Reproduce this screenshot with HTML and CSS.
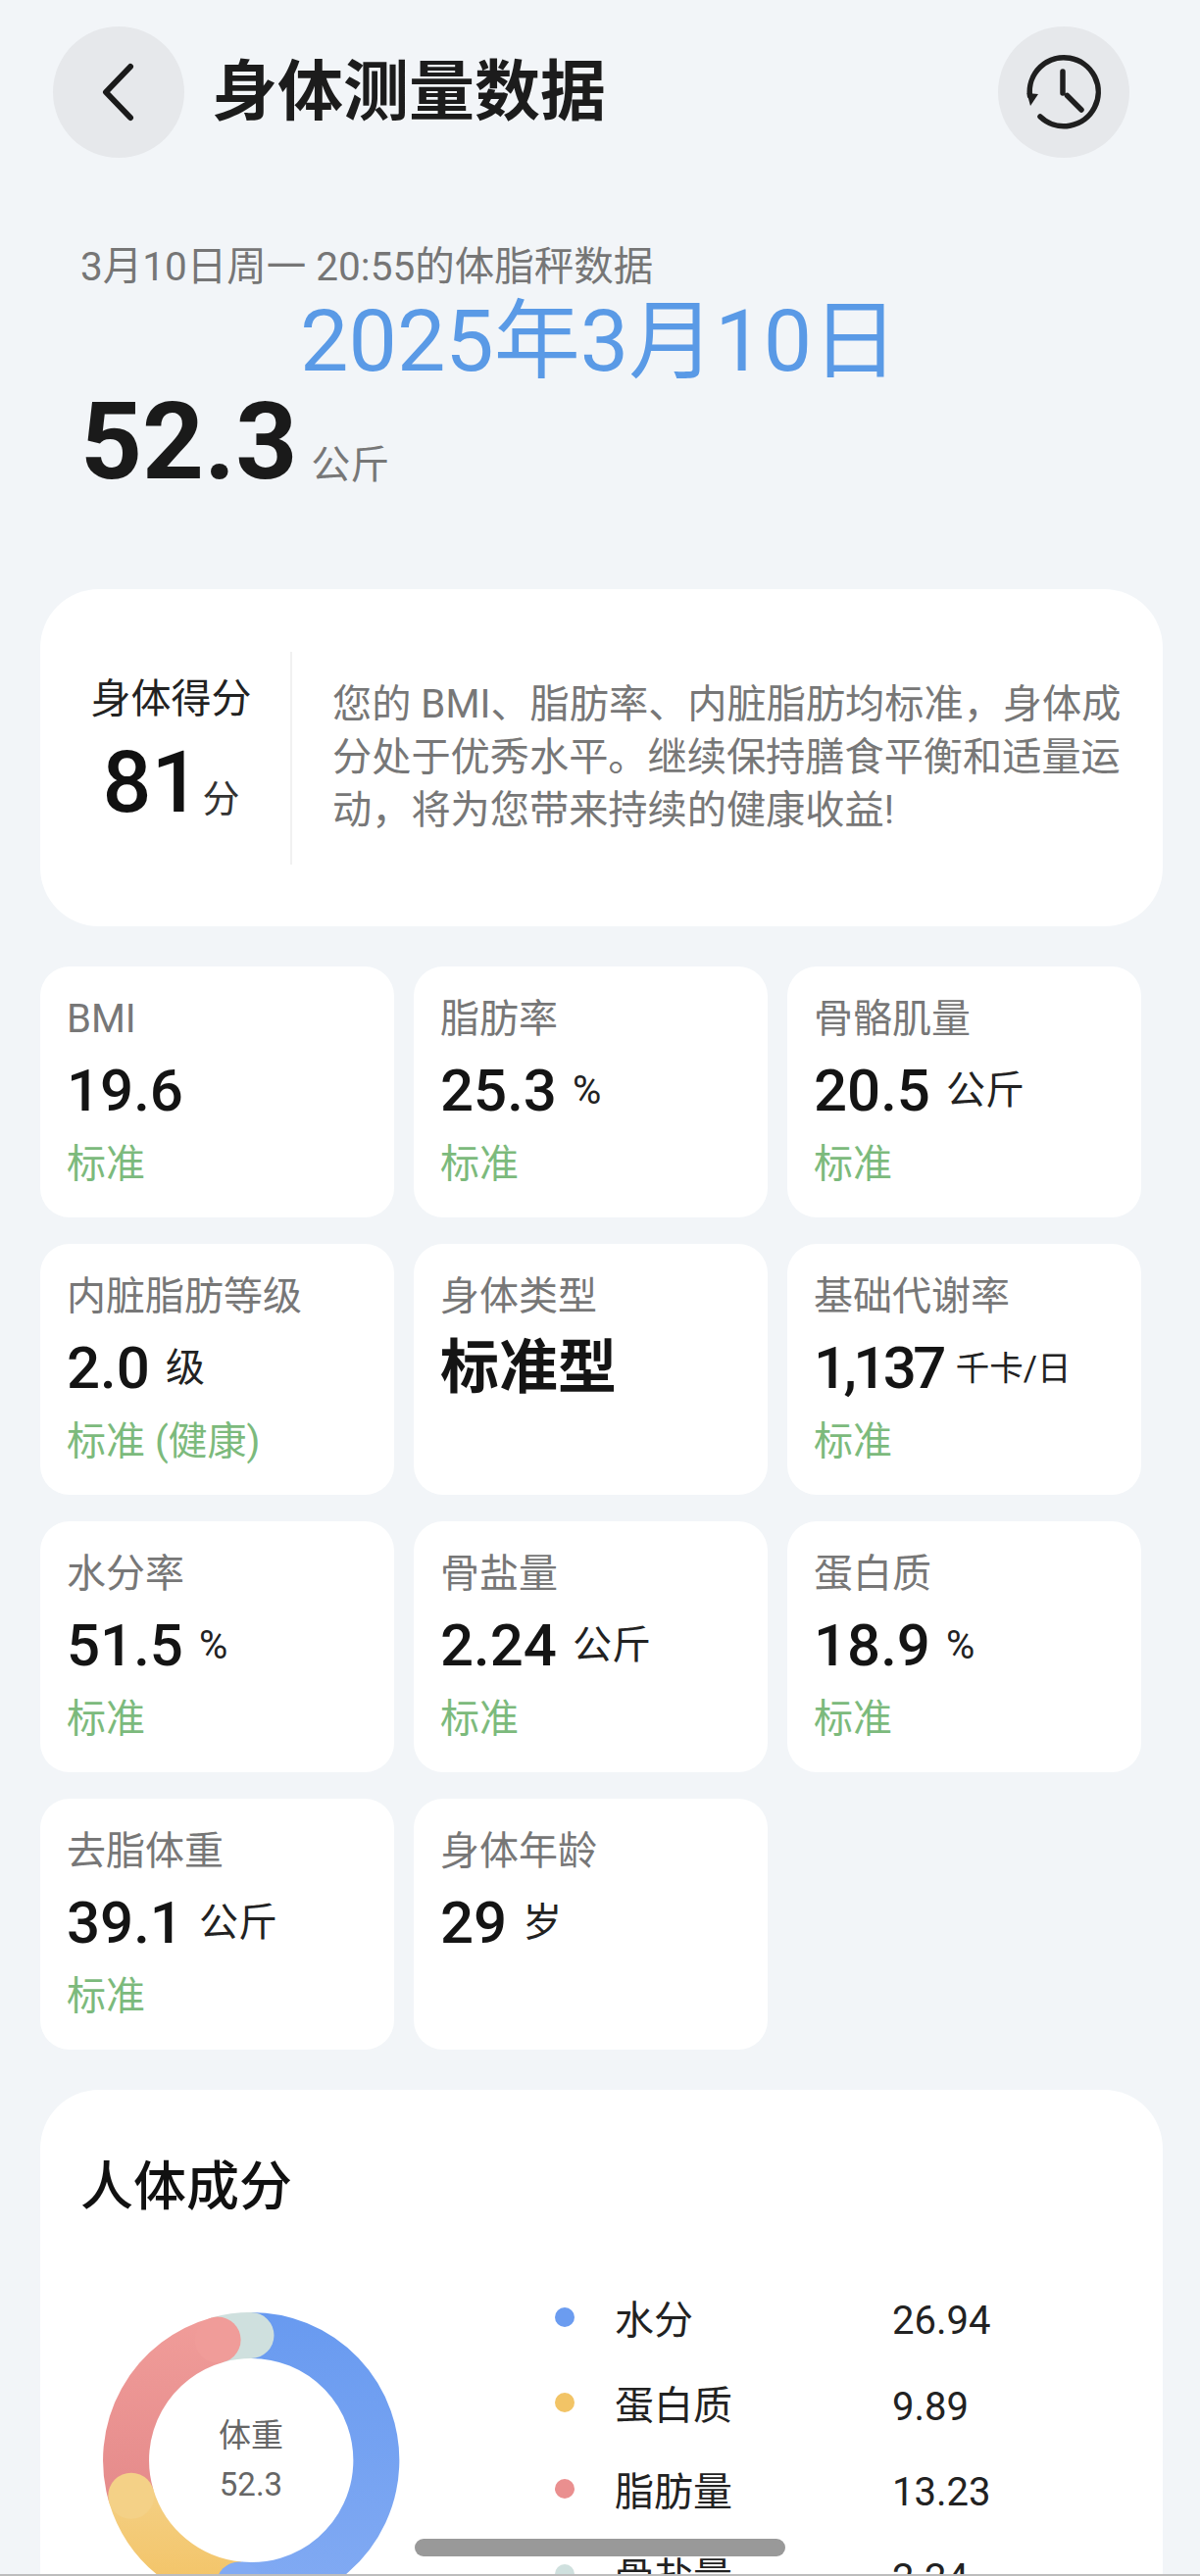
FILE: index.html
```html
<!DOCTYPE html>
<html lang="zh-CN">
<head>
<meta charset="utf-8">
<title>身体测量数据</title>
<link rel="stylesheet" href="styles.css">
</head>
<body>
<div class="page">
  <header class="header">
    <button class="round-btn" aria-label="返回">
      <svg class="back-icon" viewBox="0 0 40 64"><path d="M32 6 L7 32 L32 58"/></svg>
    </button>
    <h1 class="title">身体测量数据</h1>
    <button class="round-btn history-btn" aria-label="历史">
      <svg class="history-icon" viewBox="0 0 80 80">
        <path d="M5.500 44 A35 35 0 1 1 16 65"/>
        <path d="M39 19 V41 M43.500 43.500 L58 58"/>
        <path class="arrow" d="M2.500 41 L14 42 L6 54 Z"/>
      </svg>
    </button>
  </header>

  <section class="summary">
    <div class="date">3月10日周一 20:55的体脂秤数据</div>
    <div class="stamp">2025年3月10日</div>
    <div class="weight"><span class="weight-num">52.3</span><span class="weight-unit">公斤</span></div>
  </section>

  <section class="score-card">
    <div class="score">
      <div class="score-label">身体得分</div>
      <div class="score-value"><span class="score-num">81</span><span class="score-unit">分</span></div>
    </div>
    <p class="score-text">您的 BMI、脂肪率、内脏脂肪均标准&#xFF0C;身体成分处于优秀水平。继续保持膳食平衡和适量运动&#xFF0C;将为您带来持续的健康收益!</p>
  </section>

  <section class="metrics">
    <div class="metric"><div class="m-label">BMI</div><div class="m-value">19.6</div><div class="m-status">标准</div></div>
    <div class="metric"><div class="m-label">脂肪率</div><div class="m-value">25.3<span class="m-unit">%</span></div><div class="m-status">标准</div></div>
    <div class="metric"><div class="m-label">骨骼肌量</div><div class="m-value">20.5<span class="m-unit">公斤</span></div><div class="m-status">标准</div></div>
    <div class="metric"><div class="m-label">内脏脂肪等级</div><div class="m-value">2.0<span class="m-unit">级</span></div><div class="m-status">标准 (健康)</div></div>
    <div class="metric"><div class="m-label">身体类型</div><div class="m-value m-value-text">标准型</div></div>
    <div class="metric"><div class="m-label">基础代谢率</div><div class="m-value"><span class="m-tight">1,137</span><span class="m-unit m-unit-sm">千卡/日</span></div><div class="m-status">标准</div></div>
    <div class="metric"><div class="m-label">水分率</div><div class="m-value">51.5<span class="m-unit">%</span></div><div class="m-status">标准</div></div>
    <div class="metric"><div class="m-label">骨盐量</div><div class="m-value">2.24<span class="m-unit">公斤</span></div><div class="m-status">标准</div></div>
    <div class="metric"><div class="m-label">蛋白质</div><div class="m-value">18.9<span class="m-unit">%</span></div><div class="m-status">标准</div></div>
    <div class="metric"><div class="m-label">去脂体重</div><div class="m-value">39.1<span class="m-unit">公斤</span></div><div class="m-status">标准</div></div>
    <div class="metric"><div class="m-label">身体年龄</div><div class="m-value">29<span class="m-unit">岁</span></div></div>
  </section>

  <section class="composition">
    <h2 class="comp-title">人体成分</h2>
    <div class="comp-body">
      <div class="donut">
        <svg class="donut-svg" viewBox="0 0 304 304">
          <defs>
            <linearGradient id="gb" gradientUnits="userSpaceOnUse" x1="0" y1="0" x2="0" y2="304"><stop offset="0" stop-color="#689af0"/><stop offset="1" stop-color="#83abf3"/></linearGradient>
            <linearGradient id="gy" gradientUnits="userSpaceOnUse" x1="0" y1="170" x2="0" y2="304"><stop offset="0" stop-color="#f4d187"/><stop offset="1" stop-color="#f3c161"/></linearGradient>
            <linearGradient id="gr" gradientUnits="userSpaceOnUse" x1="0" y1="10" x2="0" y2="190"><stop offset="0" stop-color="#f09c99"/><stop offset="1" stop-color="#e58b8b"/></linearGradient>
          </defs>
          <g fill="none" stroke-width="47">
            <path stroke="url(#gb)" d="M152 24.500 A127.500 127.500 0 1 1 140 278.900"/>
            <path stroke="url(#gy)" d="M140 278.900 A127.500 127.500 0 0 1 29.800 188.200"/>
            <path stroke="url(#gr)" d="M29.800 188.200 A127.500 127.500 0 0 1 118.100 29.100"/>
            <path stroke="#cfe0de" d="M118.100 29.100 A127.500 127.500 0 0 1 152 24.500"/>
          </g>
          <circle cx="152" cy="24.500" r="23.500" fill="#cfe0de"/>
          <circle cx="118.100" cy="29.100" r="23.500" fill="#f09c99"/>
          <circle cx="29.800" cy="188.200" r="23.500" fill="#f4d187"/>
          <circle cx="140" cy="278.900" r="23.500" fill="#82aaf3"/>
        </svg>
        <div class="donut-center">
          <div class="donut-label">体重</div>
          <div class="donut-num">52.3</div>
        </div>
      </div>
      <ul class="legend">
        <li class="legend-row"><i class="dot dot-blue"></i><span class="legend-name">水分</span><span class="legend-val">26.94</span></li>
        <li class="legend-row"><i class="dot dot-yellow"></i><span class="legend-name">蛋白质</span><span class="legend-val">9.89</span></li>
        <li class="legend-row"><i class="dot dot-red"></i><span class="legend-name">脂肪量</span><span class="legend-val">13.23</span></li>
        <li class="legend-row"><i class="dot dot-gray"></i><span class="legend-name">骨盐量</span><span class="legend-val">2.24</span></li>
      </ul>
    </div>
  </section>
</div>
<div class="home-bar"></div>
<div class="edge-line"></div>
</body>
</html>
```

FILE: styles.css
```css
* { box-sizing: border-box; }
html, body {
  margin: 0;
  padding: 0;
  height: 2628px;
  overflow: hidden;
  background: #f2f5f8;
}
body {
  position: relative;
  font-family: Roboto, "Noto Sans CJK SC", sans-serif;
  color: #1a1a1a;
}
.page { width: 1224px; }

.header {
  display: flex;
  align-items: center;
  padding: 27px 72px 0 54px;
}
.round-btn {
  width: 134px;
  height: 134px;
  padding: 0;
  border: 0;
  border-radius: 50%;
  background: #e6e8eb;
  display: flex;
  align-items: center;
  justify-content: center;
}
.back-icon {
  width: 40px;
  height: 64px;
  fill: none;
  stroke: #1a1a1a;
  stroke-width: 6;
  stroke-linecap: round;
  stroke-linejoin: round;
}
.title {
  margin: 0 0 0 28px;
  font-size: 67px;
  line-height: 134px;
  font-weight: 700;
  color: #1c1c1c;
}
.history-btn { margin-left: auto; }
.history-icon {
  width: 80px;
  height: 80px;
  fill: none;
  stroke: #1f1f1f;
  stroke-width: 5.500;
  stroke-linecap: round;
}
.history-icon .arrow { fill: #1f1f1f; stroke: none; }

.summary { padding: 86px 0 0 82px; }
.date {
  font-size: 40.500px;
  line-height: 50px;
  color: #767676;
}
.stamp {
  margin-left: 224px;
  font-size: 88px;
  line-height: 102px;
  color: #5a9ae6;
}
.weight {
  display: flex;
  align-items: baseline;
  line-height: 104px;
}
.weight-num {
  font-size: 110px;
  font-weight: 700;
  color: #1a1a1a;
}
.weight-unit {
  margin-left: 14px;
  font-size: 40px;
  color: #777;
}

.score-card {
  display: flex;
  align-items: center;
  width: 1145px;
  height: 344px;
  margin: 74px 0 0 41px;
  border-radius: 60px;
  background: #fff;
}
.score {
  flex: none;
  width: 257px;
  height: 217px;
  padding: 23px 0 0 12px;
  border-right: 2px solid #f1f1f1;
  text-align: center;
}
.score-label {
  font-size: 41px;
  line-height: 50px;
  color: #222;
}
.score-value { margin-top: 5px; line-height: 110px; }
.score-num { font-size: 88px; font-weight: 500; color: #111; }
.score-unit { margin-left: 2px; font-size: 38px; color: #333; }
.score-text {
  flex: 1;
  margin: 0;
  padding: 0 40px 0 41px;
  font-size: 40.200px;
  line-height: 54px;
  color: #777;
}

.metrics {
  display: grid;
  grid-template-columns: repeat(3, 360.500px);
  grid-auto-rows: 256px;
  column-gap: 20.500px;
  row-gap: 27px;
  margin: 41px 0 0 41px;
}
.metric {
  padding: 29px 20px 0 27px;
  border-radius: 30px;
  background: #fff;
}
.m-label {
  font-size: 40px;
  line-height: 50px;
  color: #777;
}
.m-value {
  display: flex;
  align-items: center;
  margin-top: 8px;
  font-size: 60px;
  line-height: 80px;
  font-weight: 500;
  color: #141414;
}
.m-value-text { font-weight: 600; }
.m-tight { letter-spacing: -3.600px; }
.m-unit {
  margin-left: 16px;
  font-size: 40px;
  font-weight: 400;
  color: #222;
}
.m-unit-sm { margin-left: 13px; font-size: 34.500px; }
.m-status {
  margin-top: 10px;
  font-size: 40px;
  line-height: 50px;
  color: #7cba7c;
}

.composition {
  height: 800px;
  width: 1145px;
  margin: 41px 0 0 41px;
  padding: 62px 0 0 41px;
  border-radius: 60px;
  background: #fff;
}
.comp-title {
  margin: 0;
  font-size: 54px;
  line-height: 76px;
  font-weight: 500;
  color: #111;
}
.comp-body {
  display: flex;
  margin-top: 88px;
}
.donut {
  position: relative;
  flex: none;
  width: 304px;
  height: 304px;
  margin: 0 0 0 22px;
}
.donut-svg { display: block; width: 304px; height: 304px; }
.donut-center {
  position: absolute;
  inset: 0;
  display: flex;
  flex-direction: column;
  align-items: center;
  justify-content: center;
  color: #666;
}
.donut-label { font-size: 33px; line-height: 50px; }
.donut-num { font-size: 33px; line-height: 50px; }

.legend {
  flex: none;
  margin: -38px 0 0 158px;
  padding: 0;
  list-style: none;
}
.legend-row {
  display: flex;
  align-items: center;
  height: 87.500px;
  font-size: 40px;
  color: #222;
}
.dot {
  flex: none;
  width: 20px;
  height: 20px;
  border-radius: 50%;
}
.dot-blue { background: #6b9cf0; }
.dot-yellow { background: #f2c466; }
.dot-red { background: #ea8f8f; }
.dot-gray { background: #cfe0de; }
.legend-name { width: 283px; margin-left: 41px; }
.legend-val { padding-top: 8px; }

.home-bar {
  position: absolute;
  left: 423px;
  top: 2590px;
  width: 378px;
  height: 18px;
  border-radius: 9px;
  background: #999;
}
.edge-line {
  position: absolute;
  left: 0;
  right: 0;
  bottom: 0;
  height: 2px;
  background: #bdbdbd;
}
```
